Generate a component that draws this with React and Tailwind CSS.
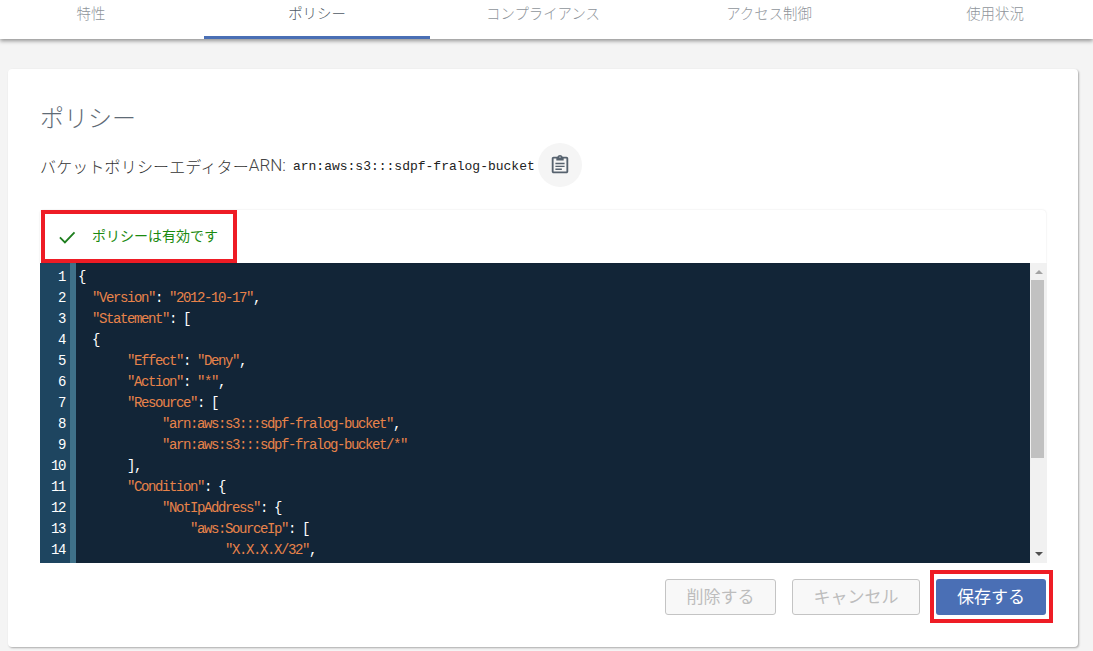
const jp = '"Noto Sans CJK JP", "Noto Sans", sans-serif';
const mono = '"Liberation Mono", "Noto Sans CJK JP", monospace';

const S = ({ children }) => <span className="text-[#e8834a]">{children}</span>;

const lines = [
  <>{"{"}</>,
  <>{"  "}<S>"Version"</S>: <S>"2012-10-17"</S>,</>,
  <>{"  "}<S>"Statement"</S>: [</>,
  <>{"  {"}</>,
  <>{"       "}<S>"Effect"</S>: <S>"Deny"</S>,</>,
  <>{"       "}<S>"Action"</S>: <S>"*"</S>,</>,
  <>{"       "}<S>"Resource"</S>: [</>,
  <>{"            "}<S>"arn:aws:s3:::sdpf-fralog-bucket"</S>,</>,
  <>{"            "}<S>"arn:aws:s3:::sdpf-fralog-bucket/*"</S></>,
  <>{"       "}],</>,
  <>{"       "}<S>"Condition"</S>: {"{"}</>,
  <>{"            "}<S>"NotIpAddress"</S>: {"{"}</>,
  <>{"                "}<S>"aws:SourceIp"</S>: [</>,
  <>{"                     "}<S>"X.X.X.X/32"</S>,</>,
];

const tabs = ["特性", "ポリシー", "コンプライアンス", "アクセス制御", "使用状況"];

export default function App() {
  return (
    <div className="h-[651px] overflow-hidden bg-[#f4f4f4]" style={{ fontFamily: jp }}>
      <div className="h-[39px] bg-white shadow-[0_2px_4px_rgba(0,0,0,0.4)] relative overflow-hidden">
        <div className="flex ml-[-22px] w-[1130px]">
          {tabs.map((t, i) => (
            <div
              key={t}
              className={`w-[226px] h-[39px] pt-[2px] text-center text-[14.4px] leading-[22px] font-light border-b-[3px] ${
                i === 1 ? "border-[#4a6fb5] text-[#4f5a64]" : "border-transparent text-[#8f959b]"
              }`}
            >
              {t}
            </div>
          ))}
        </div>
      </div>

      <div className="relative mx-2 mt-[30px] w-[1070px] h-[578px] bg-white rounded-[4px] shadow-[1px_1px_2px_rgba(0,0,0,0.3)] px-8 pt-[31px]">
        <h1 className="text-[24px] leading-[34px] font-light text-[#5f6b76]">ポリシー</h1>
        <div className="flex items-center mt-[9px] h-[44px]">
          <span className="pt-[1px] text-[16px] tracking-[0.15px] text-[#333] font-light whitespace-nowrap">バケットポリシーエディター</span>
          <span className="pt-[1px] text-[17px] text-[#444] font-light" style={{ fontFamily: '"Roboto", sans-serif' }}>ARN:</span>
          <span className="ml-[7px] pt-[3px] text-[13px] text-[#222]" style={{ fontFamily: mono }}>arn:aws:s3:::sdpf-fralog-bucket</span>
          <button className="ml-[3px] w-[44px] h-[44px] rounded-full bg-[#f5f5f5] flex items-center justify-center">
            <svg width="22" height="22" viewBox="0 0 24 24" fill="#56626e">
              <path fillRule="evenodd" d="M19 3h-4.18C14.4 1.84 13.3 1 12 1s-2.4.84-2.82 2H5c-1.1 0-2 .9-2 2v14c0 1.1.9 2 2 2h14c1.1 0 2-.9 2-2V5c0-1.1-.9-2-2-2zm0 16H5V5h14v14zM12 2.75c.41 0 .75.34.75.75s-.34.75-.75.75-.75-.34-.75-.75.34-.75.75-.75z" />
              <path d="M8 4h8v3H8zM7 9.5h10v1.6H7zM7 12.7h10v1.6H7zM7 15.9h7v1.6H7z" />
            </svg>
          </button>
        </div>

        <div className="mt-[23px] w-[1006px] h-[53px] rounded-t-[4px] bg-white shadow-[0_0_2px_rgba(0,0,0,0.12)] flex items-center relative">
          <svg className="ml-[17px]" width="20" height="20" viewBox="0 0 24 24" fill="none" stroke="#1e7e1e" strokeWidth="2.2">
            <path d="M3.5 12.5l6 6L21 6.5" />
          </svg>
          <span className="ml-[15px] mb-[2px] text-[14px] text-[#1b8a10]">ポリシーは有効です</span>
        </div>

        <div className="flex w-[1007px] h-[300px]">
          <div className="w-[30px] bg-[#1e4560] text-right pr-[5px] text-white text-[14px] leading-[21px] tracking-[-1.4px] pt-[4px]" style={{ fontFamily: mono }}>
            {lines.map((_, i) => <div key={i}>{i + 1}</div>)}
          </div>
          <div className="w-[6px] bg-[#3f7189]" />
          <div className="w-[954px] bg-[#122537] pl-[2px] pt-[4px] text-white text-[14px] leading-[21px] tracking-[-1.4px] whitespace-pre overflow-hidden" style={{ fontFamily: mono }}>
            {lines.map((l, i) => <div key={i}>{l}</div>)}
          </div>
          <div className="w-[17px] bg-[#f1f1f1] flex flex-col items-center relative">
            <div className="mt-[7px] w-0 h-0 border-x-[4px] border-x-transparent border-b-[4px] border-b-[#a3a3a3]" />
            <div className="mt-[6px] w-[13px] ml-[-2px] h-[178px] bg-[#c1c1c1]" />
            <div className="mt-auto mb-[7px] w-0 h-0 border-x-[4px] border-x-transparent border-t-[4px] border-t-[#505050]" />
          </div>
        </div>

        <div className="flex justify-end gap-4 mt-4 w-[1006px]">
          {["削除する", "キャンセル"].map((t, i) => (
            <button key={t} className={`h-[36px] ${i ? "w-[128px]" : "w-[111px]"} rounded-[3px] border border-[#c4c4c4] bg-[#f8f8f8] text-[#bdbdbd] text-[17px] pb-[3px]`}>{t}</button>
          ))}
          <button className="h-[36px] w-[110px] rounded-[3px] bg-[#4a6fb5] text-white text-[17px] pb-[3px]">保存する</button>
        </div>

        <div className="absolute left-[33px] top-[141px] w-[196px] h-[53px] border-[4px] border-[#ee1c25]" />
        <div className="absolute left-[922px] top-[501px] w-[123px] h-[53px] border-[4px] border-[#ee1c25]" />
      </div>
    </div>
  );
}
